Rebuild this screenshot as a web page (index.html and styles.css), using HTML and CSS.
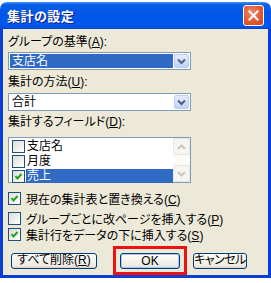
FILE: index.html
```html
<!DOCTYPE html>
<html lang="ja">
<head>
  <meta charset="UTF-8">
  <title>集計の設定</title>
  <link rel="stylesheet" href="styles.css">
</head>
<body>
  <div class="window">
    <div class="titlebar">
      <span class="title">集計の設定</span>
      <span class="close">
        <svg width="11" height="11" viewBox="0 0 11 11"><path d="M1.5 1.5 L9.5 9.5 M9.5 1.5 L1.5 9.5" stroke="#fff" stroke-width="2" stroke-linecap="square"/></svg>
      </span>
    </div>

    <div class="frame">
      <div class="label">グループの基準(<u>A</u>):</div>
      <div class="combo">
        <div class="combo-value selected">支店名</div>
        <div class="combo-btn">
          <svg width="9" height="7" viewBox="0 0 9 7"><path d="M1 1.5 L4.5 5 L8 1.5" fill="none" stroke="#4d6185" stroke-width="2"/></svg>
        </div>
      </div>

      <div class="label label-gap">集計の方法(<u>U</u>):</div>
      <div class="combo">
        <div class="combo-value">合計</div>
        <div class="combo-btn">
          <svg width="9" height="7" viewBox="0 0 9 7"><path d="M1 1.5 L4.5 5 L8 1.5" fill="none" stroke="#4d6185" stroke-width="2"/></svg>
        </div>
      </div>

      <div class="label label-gap">集計するフィールド(<u>D</u>):</div>
      <div class="listbox">
        <div class="items">
          <div class="item"><span class="check"></span><span class="item-text">支店名</span></div>
          <div class="item"><span class="check"></span><span class="item-text">月度</span></div>
          <div class="item"><span class="check checked"></span><span class="item-text selected">売上</span></div>
        </div>
        <div class="scrollbar">
          <div class="sb-btn">
            <svg width="9" height="6" viewBox="0 0 9 6"><path d="M1 5 L4.5 1.5 L8 5" fill="none" stroke="#c9c7ba" stroke-width="2"/></svg>
          </div>
          <div class="sb-track"></div>
          <div class="sb-btn">
            <svg width="9" height="6" viewBox="0 0 9 6"><path d="M1 1 L4.5 4.5 L8 1" fill="none" stroke="#c9c7ba" stroke-width="2"/></svg>
          </div>
        </div>
      </div>

      <div class="option opt-1"><span class="check checked"></span><span>現在の集計表と置き換える(<u>C</u>)</span></div>
      <div class="option opt-2"><span class="check"></span><span>グループごとに改ページを挿入する(<u>P</u>)</span></div>
      <div class="option opt-3"><span class="check checked"></span><span>集計行をデータの下に挿入する(<u>S</u>)</span></div>

      <div class="buttons">
        <button class="btn btn-clear">すべて削除(<u>R</u>)</button>
        <span class="mark"><button class="btn btn-ok">OK</button></span>
        <button class="btn btn-cancel">キャンセル</button>
      </div>
    </div>
  </div>
</body>
</html>
```

FILE: styles.css
```css
body {
  margin: 0;
  background: #fff;
  font-family: "Liberation Sans", "Noto Sans CJK JP", sans-serif;
  font-size: 12px;
  font-feature-settings: "palt";
  color: #000;
}

.window {
  width: 271px;
  margin-top: 2px;
  background: #ece9d8;
  border-radius: 7px 7px 0 0;
  overflow: hidden;
}

.titlebar {
  height: 27px;
  display: flex;
  align-items: center;
  padding: 0 7px 0 7px;
  background: linear-gradient(to bottom, #3d95ff 0%, #0a5fe8 10%, #0055e5 45%, #0058ee 85%, #0046d8 100%);
}

.title {
  color: #fff;
  font-weight: bold;
  font-size: 13px;
  letter-spacing: 0.5px;
  text-shadow: 1px 1px 0 #0f1f8a;
}

.close {
  margin-left: auto;
  width: 19px;
  height: 19px;
  border: 1px solid #fff;
  border-radius: 3px;
  background: radial-gradient(circle at 40% 35%, #f08b68 0%, #e05a33 55%, #c94520 100%);
  display: flex;
  align-items: center;
  justify-content: center;
}

.frame {
  border: 3px solid #0a3fd6;
  border-top: 0;
  padding: 5px 5px 0 5px;
}

.label {
  height: 16px;
  line-height: 16px;
}

.label-gap {
  margin-top: 3px;
}

.combo {
  width: 183px;
  height: 18px;
  margin-top: 2px;
  box-sizing: border-box;
  border: 1px solid #7f9db9;
  background: #fff;
  display: flex;
  padding: 1px;
}

.label-gap + .combo {
  margin-top: 3px;
}

.combo + .label-gap {
  margin-top: 4px;
}

.combo + .label-gap + .combo + .label-gap {
  margin-top: 3px;
}

.combo-value {
  flex: 1;
  line-height: 14px;
  padding-left: 2px;
  margin-right: 1px;
}

.selected {
  background: #316ac5;
  color: #fff;
}

.combo-btn {
  width: 15px;
  box-sizing: border-box;
  border: 1px solid #b9cdf7;
  border-radius: 2px;
  background: linear-gradient(to bottom, #e4edfd, #c0d3f9);
  display: flex;
  align-items: center;
  justify-content: center;
}

.listbox {
  width: 183px;
  height: 46px;
  margin-top: 7px;
  box-sizing: border-box;
  border: 1px solid #7f9db9;
  background: #fff;
  display: flex;
}

.items {
  flex: 1;
  padding: 1px 0 0 3px;
}

.item {
  height: 14px;
  display: flex;
  align-items: center;
}

.item + .item {
  margin-top: 1px;
}

.item-text {
  margin-left: 1px;
  padding: 0 1px;
  line-height: 14px;
  flex: 1;
}

.item-text:not(.selected) {
  flex: 0 0 auto;
}

.scrollbar {
  width: 17px;
  display: flex;
  flex-direction: column;
  background: #fcfcf9;
}

.sb-btn {
  height: 17px;
  box-sizing: border-box;
  border: 1px solid #e8e7e0;
  border-radius: 2px;
  background: #f6f5f0;
  display: flex;
  align-items: center;
  justify-content: center;
}

.sb-track {
  flex: 1;
}

.check {
  width: 13px;
  height: 13px;
  box-sizing: border-box;
  border: 1px solid #1c5180;
  background: linear-gradient(135deg, #dcdcd7, #fff);
  flex: 0 0 auto;
}

.check.checked {
  background-image: url("data:image/svg+xml,%3Csvg xmlns='http://www.w3.org/2000/svg' width='11' height='11'%3E%3Cpath d='M2.5 5 L4.5 7.5 L8.5 3' fill='none' stroke='%2321a121' stroke-width='2'/%3E%3C/svg%3E"), linear-gradient(135deg, #dcdcd7, #fff);
}

.option {
  height: 15px;
  display: flex;
  align-items: center;
  gap: 5px;
}

.opt-1 {
  margin-top: 8px;
}

.opt-2 {
  margin-top: 5px;
}

.opt-3 {
  margin-top: 1px;
}

.buttons {
  display: flex;
  align-items: center;
  margin-top: 4px;
  padding-left: 3px;
}

.btn {
  height: 16px;
  padding: 0;
  box-sizing: border-box;
  border: 1px solid #003c74;
  border-radius: 3px;
  background: linear-gradient(to bottom, #fff 0%, #f4f3ee 40%, #ecebe6 85%, #d6d0c5 100%);
  font-family: inherit;
  font-size: 12px;
  font-feature-settings: "palt";
  line-height: 13px;
  white-space: nowrap;
  color: #000;
}

.btn-clear {
  width: 86px;
}

.mark {
  margin-left: 16px;
  padding: 4px 4px 3px;
  border: 3px solid #ee1111;
  display: flex;
}

.btn-ok {
  width: 60px;
  box-shadow: inset 0 0 0 1px #aec8f2;
}

.btn-cancel {
  width: 54px;
  margin-left: 6px;
  letter-spacing: -0.5px;
}
```
